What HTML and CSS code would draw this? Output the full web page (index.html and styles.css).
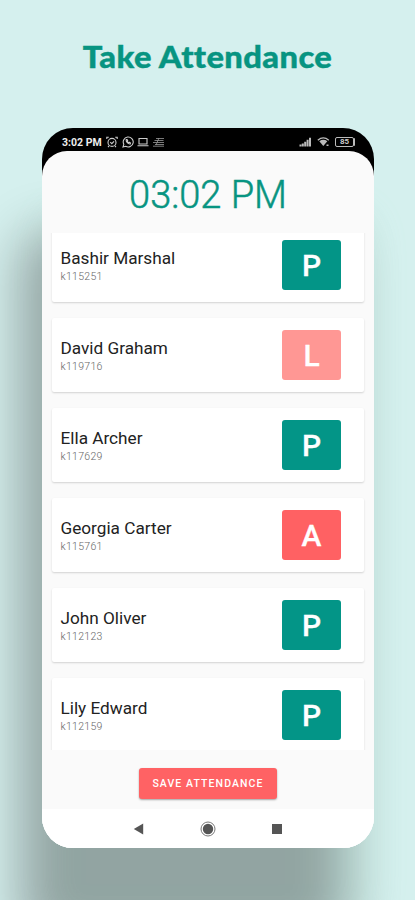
FILE: index.html
```html
<!DOCTYPE html>
<html lang="en">
<head>
<meta charset="utf-8">
<title>Take Attendance</title>
<link rel="stylesheet" href="styles.css">
</head>
<body>
<h1 class="title">Take Attendance</h1>
<main class="phone">
  <header class="status">
    <span class="status-time">3:02 PM</span>
    <svg class="ico" width="12" height="12" viewBox="0 0 12 12"><circle cx="6" cy="6.4" r="4"/><path d="M.8 3V1.200h2M11.200 3V1.200h-2M4.300 6.200l1.500 1.500L8 5.300M3 10l-1 1M9 10l1 1"/></svg>
    <svg class="ico" width="12" height="12" viewBox="0 0 12 12"><path d="M1 11l.8-2.700A5 5 0 1 1 3.700 10.300z"/><path d="M4.200 3.600c-.5 2 2 4.600 4 4.300l.3-1-1.300-.7-.7.6-1.300-1.300.5-.8-.6-1.200z"/></svg>
    <svg class="ico" width="12" height="12" viewBox="0 0 12 12"><path d="M2 2.500h8v5.500H2zM.5 9.800h11"/></svg>
    <svg class="ico dim" width="13" height="12" viewBox="0 0 13 12"><path d="M4 2.500h8M2.500 4.500h9M1 6.500h11M3 8.500h9M1 10.200h11M7 2L4 9"/></svg>
    <span class="spacer"></span>
    <svg class="signal" width="13" height="10" viewBox="0 0 13 10"><path d="M.5 7.500h2V9.500h-2zM2.800 6.500h2v3h-2zM5.200 4.800h2v4.700h-2zM7.600 2.800h2v6.700h-2zM10 .8h2v8.700h-2z"/></svg>
    <svg class="wifi" width="13" height="10" viewBox="0 0 13 10"><path d="M.8 3.200Q6.300-1.300 11.800 3.200" class="arc"/><path d="M2.300 4.200Q6.300 1.400 10.300 4.200L6.300 9z"/><path d="M9.500 7.500h2V9h-2z"/></svg>
    <span class="battery">85</span>
  </header>
  <section class="screen">
    <div class="clock">03:02 PM</div>
    <ul class="list">
      <li class="card"><div><div class="name">Bashir Marshal</div><div class="id">k115251</div></div><span class="mark present">P</span></li>
      <li class="card"><div><div class="name">David Graham</div><div class="id">k119716</div></div><span class="mark late">L</span></li>
      <li class="card"><div><div class="name">Ella Archer</div><div class="id">k117629</div></div><span class="mark present">P</span></li>
      <li class="card"><div><div class="name">Georgia Carter</div><div class="id">k115761</div></div><span class="mark absent">A</span></li>
      <li class="card"><div><div class="name">John Oliver</div><div class="id">k112123</div></div><span class="mark present">P</span></li>
      <li class="card"><div><div class="name">Lily Edward</div><div class="id">k112159</div></div><span class="mark present">P</span></li>
    </ul>
    <button class="save">SAVE ATTENDANCE</button>
    <nav class="nav">
      <svg width="16" height="16" viewBox="0 0 16 16"><path d="M2.800 8l9.400-5.500v11z"/></svg>
      <svg width="16" height="16" viewBox="0 0 16 16"><circle cx="8" cy="8" r="7" class="ring"/><circle cx="8" cy="8" r="5.200"/></svg>
      <svg width="16" height="16" viewBox="0 0 16 16"><path d="M3 3h10v10H3z"/></svg>
    </nav>
  </section>
</main>
</body>
</html>
```

FILE: styles.css
```css
* { box-sizing: border-box; }
body {
  margin: 0;
  width: 415px;
  height: 900px;
  overflow: hidden;
  background: #d5f0ee;
  font-family: Roboto, "Liberation Sans", sans-serif;
}
.title {
  margin: 0;
  padding-top: 37px;
  height: 128px;
  text-align: center;
  font: 900 30px/38px Lato, sans-serif;
  letter-spacing: 0.35px;
  transform: scaleX(1.09);
  -webkit-text-stroke: 0.4px #079481;
  color: #079481;
}
.phone {
  width: 332px;
  height: 720px;
  margin-left: 42px;
  border-radius: 31px;
  background: linear-gradient(#000 60px, #fff 60px);
  box-shadow: -25px 102px 52px -2px rgba(12, 0, 8, 0.31), 0 80px 36px rgba(160, 225, 195, 0.14);
}
.status {
  height: 23px;
  padding: 5px 19px 0 20px;
  display: flex;
  align-items: center;
  color: #eee;
}
.status-time {
  width: 41px;
  margin-right: 3px;
  font-size: 10.5px;
  font-weight: 700;
  white-space: nowrap;
}
.ico {
  margin-right: 3.5px;
  fill: none;
  stroke: #ccc;
  stroke-width: 1.1;
}
.dim { stroke: #999; stroke-width: 0.8; margin-left: -1px; }
.spacer { flex: 1; }
.signal, .wifi { fill: #bbb; margin-right: 5px; }
.arc { fill: none; stroke: #bbb; stroke-width: 1.3; }
.battery {
  width: 19px;
  height: 10px;
  border: 1.5px solid #bbb;
  border-radius: 2px;
  color: #ccc;
  font-size: 8px;
  font-weight: 700;
  line-height: 8px;
  text-align: center;
  margin-right: 1px;
  box-shadow: 2px 0 0 -1px #bbb;
}
.screen {
  height: 697px;
  border-radius: 25px 25px 31px 31px;
  background: #fafafa;
  overflow: hidden;
  display: flex;
  flex-direction: column;
  align-items: center;
}
.clock {
  height: 82px;
  padding-top: 21px;
  font-size: 38px;
  line-height: 46px;
  font-weight: 300;
  -webkit-text-stroke: 0.5px #079481;
  color: #079481;
}
.list {
  width: 320px;
  height: 517px;
  margin: 0;
  padding: 0 4px;
  list-style: none;
  overflow: hidden;
}
.card {
  height: 74px;
  margin-bottom: 16px;
  padding: 0 23px 0 8.5px;
  display: flex;
  justify-content: space-between;
  align-items: center;
  background: #fff;
  border-radius: 2px;
  box-shadow: 0 1px 2px rgba(0, 0, 0, 0.16);
}
.card:first-child { margin-top: -5px; }
.name { font-size: 17.2px; line-height: 20px; color: #222; margin-top: 1px; }
.id {
  margin-top: 3px;
  font-size: 10.5px;
  line-height: 12px;
  letter-spacing: 0.3px;
  font-weight: 300;
  color: #666;
}
.mark {
  width: 59px;
  height: 50px;
  border-radius: 3px;
  color: #fff;
  font-size: 30px;
  line-height: 52px;
  font-weight: 500;
  -webkit-text-stroke: 0.3px #fff;
  text-align: center;
}
.present { background: #039587; }
.late { background: #ff9794; }
.absent { background: #ff6163; }
.save {
  width: 138px;
  height: 31px;
  margin: 18px 0 10px;
  padding: 0;
  border: 0;
  border-radius: 3px;
  background: #ff6264;
  color: #fff;
  font: 500 10.5px Roboto, sans-serif;
  letter-spacing: 1.1px;
  box-shadow: 0 1px 2px rgba(0, 0, 0, 0.35);
}
.nav {
  width: 100%;
  flex: 1;
  padding-right: 1px;
  display: flex;
  justify-content: center;
  align-items: center;
  gap: 53px;
  background: #fff;
  fill: #555;
}
.ring { fill: none; stroke: #777; stroke-width: 1; }
```
